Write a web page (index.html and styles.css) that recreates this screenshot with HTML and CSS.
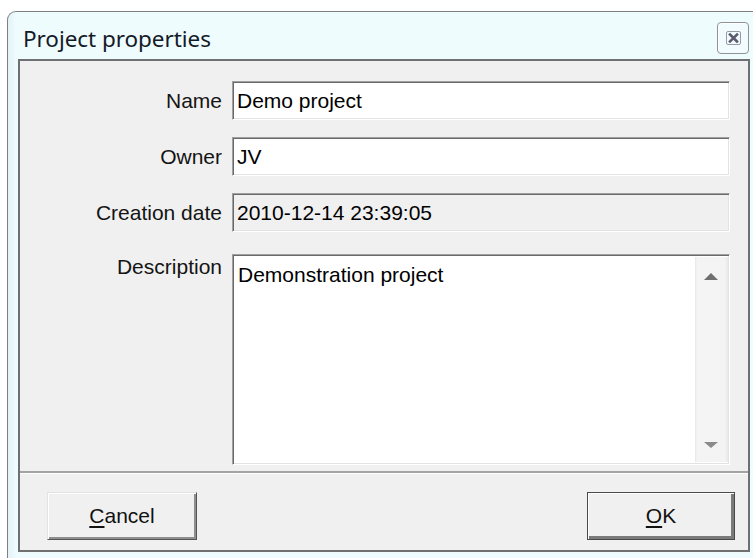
FILE: index.html
```html
<!DOCTYPE html>
<html lang="en">
<head>
<meta charset="utf-8">
<title>Project properties</title>
<link rel="stylesheet" href="styles.css">
</head>
<body>
<div class="window">
  <div class="titlebar">
    <span class="title">Project properties</span>
    <button class="close" aria-label="Close">
      <svg width="15" height="14" viewBox="0 0 15 14">
        <rect x="0.5" y="0.5" width="14" height="13" rx="1.5" fill="none" stroke="#9a9aa6" stroke-width="1"/>
        <path d="M4 3.5 L11 10.5 M11 3.5 L4 10.5" stroke="#5c5c6c" stroke-width="2.6" stroke-linecap="square"/>
      </svg>
    </button>
  </div>
  <div class="client">
    <div class="form">
      <label class="label">Name</label>
      <div class="field">Demo project</div>
      <label class="label">Owner</label>
      <div class="field">JV</div>
      <label class="label">Creation date</label>
      <div class="field disabled">2010-12-14 23:39:05</div>
      <label class="label label-top">Description</label>
      <div class="field memo">
        <div class="memo-text">Demonstration project</div>
        <div class="vscroll">
          <span class="arrow up"></span>
          <span class="arrow down"></span>
        </div>
      </div>
    </div>
    <div class="separator"></div>
    <div class="buttons">
      <button class="btn"><u>C</u>ancel</button>
      <button class="btn default"><u>O</u>K</button>
    </div>
  </div>
</div>
</body>
</html>
```

FILE: styles.css
```css
html, body {
  margin: 0;
  padding: 0;
  background: #ffffff;
  overflow: hidden;
}

body {
  width: 753px;
  height: 558px;
}

/* window frame; its right and bottom sides run past the page edge */
.window {
  box-sizing: border-box;
  margin: 11px 0 0 7px;
  width: 746px;
  height: 547px;
  border: 1px solid #7d7f82;
  border-right: none;
  border-bottom: none;
  border-radius: 9px 0 0 0;
  background: linear-gradient(90deg, #e4f2f8 0px, #eefcfe 8px, #effcfe 100%);
}

.titlebar {
  display: flex;
  align-items: flex-start;
  width: 741px;
  height: 47px;
}

.title {
  margin: 13px 0 0 15px;
  font-family: "Noto Sans", "Open Sans", sans-serif;
  font-size: 22.5px;
  line-height: 28px;
  color: #141a28;
  letter-spacing: -0.05px;
}

.close {
  margin: 10px 0 0 auto;
  width: 32px;
  height: 32px;
  padding: 0;
  display: flex;
  align-items: center;
  justify-content: center;
  border: 1px solid #8f9397;
  border-radius: 4px;
  background: #f2fbfd;
  box-shadow: inset 1px 1px 0 #ffffff;
}

.client {
  margin-left: 10px;
  width: 728px;
  border: 2px solid #6f7072;
  background: #f0f0f0;
  font-family: "Liberation Sans", Arial, sans-serif;
  font-size: 21px;
  color: #111111;
}

.form {
  display: grid;
  grid-template-columns: 202px 498px;
  column-gap: 10px;
  row-gap: 17px;
  padding-top: 20px;
}

.label {
  justify-self: end;
  align-self: center;
  color: #141414;
  line-height: 24px;
}

.label-top {
  align-self: start;
  margin-top: 6px;
}

.field {
  box-sizing: border-box;
  height: 39px;
  padding: 0 4px;
  display: flex;
  align-items: center;
  background: #ffffff;
  border: 1px solid;
  border-color: #a0a0a0 #ffffff #ffffff #a0a0a0;
  box-shadow: inset 1px 1px 0 #696969, inset -1px -1px 0 #e3e3e3;
  color: #000000;
  white-space: nowrap;
}

.field.disabled {
  background: #f0f0f0;
}

.field.memo {
  margin-top: 5px;
  height: 211px;
  padding: 0;
  align-items: stretch;
}

.memo-text {
  flex: 1;
  padding: 8px 0 0 5px;
  line-height: 24px;
}

.vscroll {
  position: relative;
  width: 33px;
  margin: 2px 1px 2px 0;
  background: linear-gradient(90deg, #e6e6e6 0px, #f4f4f4 2px, #f3f3f3 30px, #e8e8e8 33px);
}

/* scroll arrows sit over the track */
.arrow {
  position: absolute;
  left: 9px;
  width: 0;
  height: 0;
  border-left: 7px solid transparent;
  border-right: 7px solid transparent;
}

.arrow.up {
  top: 16px;
  border-bottom: 7px solid #6f6f6f;
}

.arrow.down {
  bottom: 14px;
  border-top: 6px solid #8a8a8a;
}

.separator {
  margin-top: 6px;
  height: 2px;
  background: #a3a3a3;
  border-bottom: 1px solid #ffffff;
}

.buttons {
  display: flex;
  justify-content: space-between;
  padding: 18px 13px 10px 27px;
}

.btn {
  box-sizing: border-box;
  width: 150px;
  height: 48px;
  padding: 0;
  font-family: "Liberation Sans", Arial, sans-serif;
  font-size: 21px;
  color: #111111;
  background: #f0f0f0;
  border: 1px solid;
  border-color: #e3e3e3 #555555 #555555 #e3e3e3;
  box-shadow: inset 1px 1px 0 #ffffff, inset -2px -2px 0 #8e8e8e;
}

.btn u {
  text-underline-offset: 3px;
}

.btn.default {
  width: 148px;
  border: 1px solid #4a4a4a;
  box-shadow: inset 1px 1px 0 #ffffff, inset -3px -3px 0 #7a7a7a;
}
```
